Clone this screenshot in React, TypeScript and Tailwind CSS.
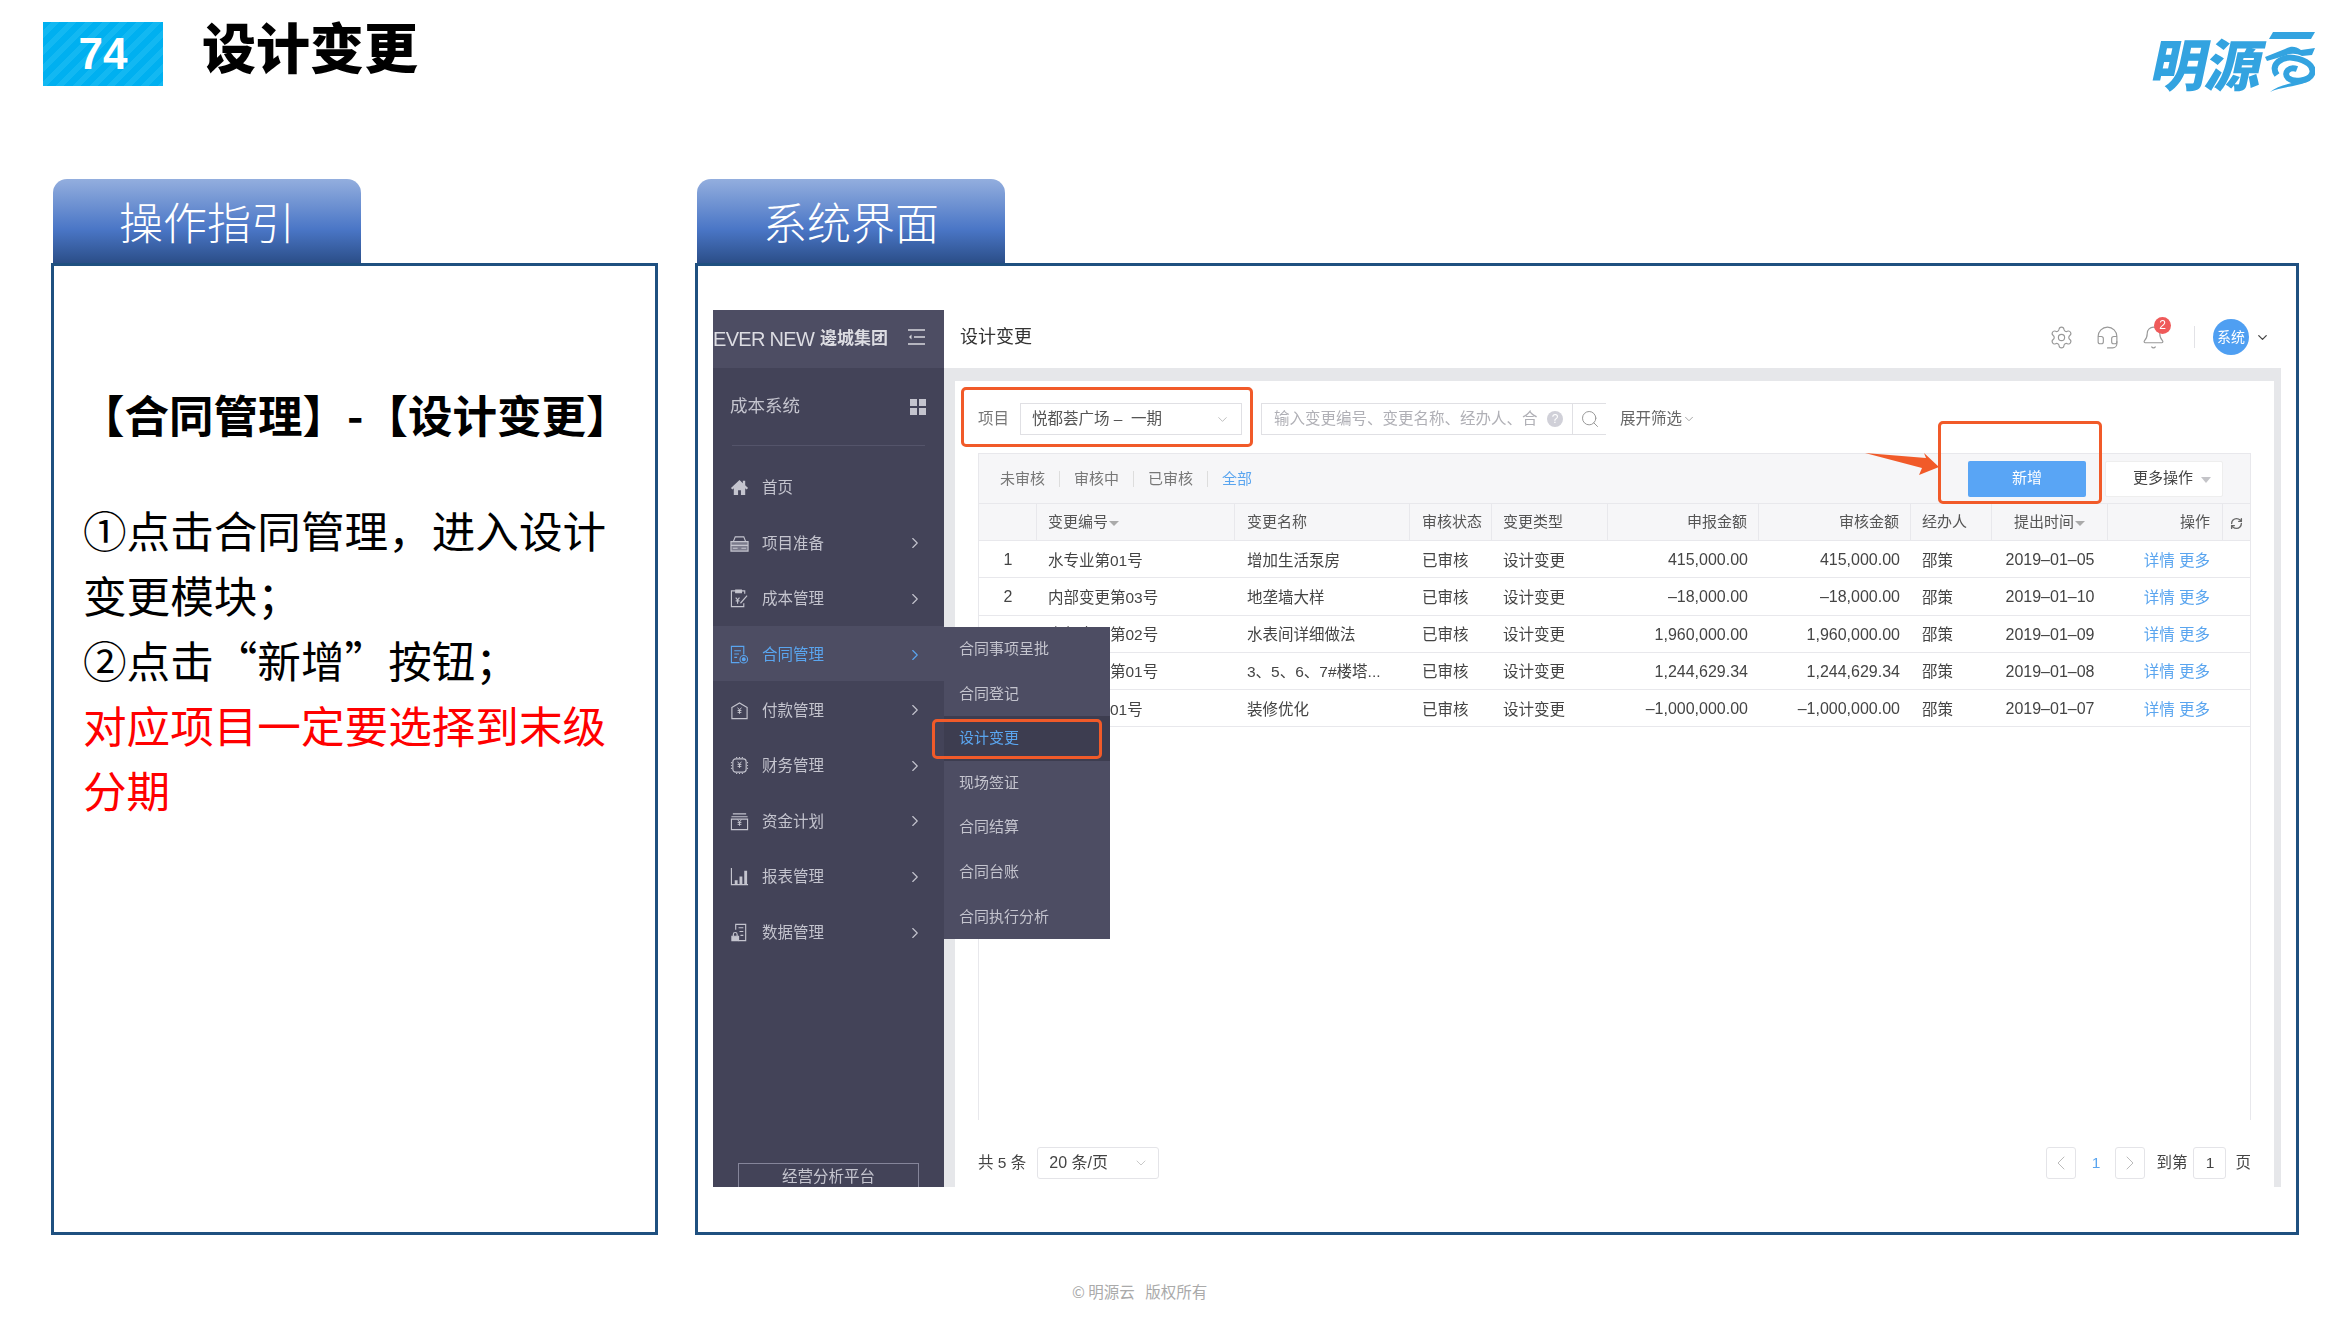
import { ChevronDown, ChevronLeft, ChevronRight, Bell, Headset, RefreshCw, Search, Settings } from "lucide-react";

const uiFont = "[font-family:'Liberation_Sans','Noto_Sans_CJK_SC',sans-serif]";

function IconShell({ children }: { children: React.ReactNode }) {
  return (
    <svg viewBox="0 0 20 20" className="w-[19px] h-[19px] shrink-0" fill="none" stroke="currentColor" strokeWidth="1.2">
      {children}
    </svg>
  );
}

const Yen = ({ y = 10 }: { y?: number }) => (
  <path d={`M8 ${y - 3}l2 2.5 2-2.5M10 ${y - 0.5}v4M8 ${y}h4M8 ${y + 2}h4`} strokeWidth="1" />
);

const menu = [
  {
    label: "首页",
    icon: (
      <IconShell>
        <path d="M10 2 1 10.5l1.5 1.5L4 10.7V18h4.5v-5h3v5H16v-7.3l1.5 1.3 1.5-1.5-3-2.8V3h-2.5v2.4z" fill="currentColor" stroke="none" />
      </IconShell>
    ),
  },
  {
    label: "项目准备",
    arrow: true,
    icon: (
      <IconShell>
        <path d="M3.5 8 5.5 3h9l2 5" />
        <path d="M1 8h18v4H1zM1 12h18v6H1z" fill="currentColor" fillOpacity="0.45" />
        <path d="M3 15h5M12 15h5" />
      </IconShell>
    ),
  },
  {
    label: "成本管理",
    arrow: true,
    icon: (
      <IconShell>
        <path d="M6 2H1.5v16.5h13V15M12 2h3.5v3" />
        <path d="M6 1h6v3H6z" fill="currentColor" />
        <path d="M6 9l2 2.5L10 9M8 11.500v4M6 12.500h4M18 7l-7 8" />
      </IconShell>
    ),
  },
  {
    label: "合同管理",
    arrow: true,
    active: true,
    icon: (
      <IconShell>
        <path d="M10 18.500H1.500v-17h13V10M4.500 6h7M4.500 9.500h5M4.500 13h3" />
        <circle cx="14.500" cy="15" r="4" />
        <circle cx="14.500" cy="15" r="1.500" fill="currentColor" />
      </IconShell>
    ),
  },
  {
    label: "付款管理",
    arrow: true,
    icon: (
      <IconShell>
        <path d="M1.500 7 10 2l8.500 5M2 7v11.500h16V7" />
        <Yen y={10} />
      </IconShell>
    ),
  },
  {
    label: "财务管理",
    arrow: true,
    icon: (
      <IconShell>
        <rect x="3" y="3" width="14" height="14" rx="3" />
        <path d="M1 7h1M1 10h1M1 13h1M18 7h1M18 10h1M18 13h1M7 1v1M10 1v1M13 1v1M7 18v1M10 18v1M13 18v1" />
        <Yen y={9} />
      </IconShell>
    ),
  },
  {
    label: "资金计划",
    arrow: true,
    icon: (
      <IconShell>
        <path d="M3 2h14M1.500 5h17" />
        <path d="M1.500 7.500h17V18.500h-17z" />
        <Yen y={11} />
      </IconShell>
    ),
  },
  {
    label: "报表管理",
    arrow: true,
    icon: (
      <IconShell>
        <path d="M1.500 1v17.500h17.500" />
        <path d="M5 14h3v4H5zM10 10h3v8h-3zM15 4h3v14h-3z" fill="currentColor" stroke="none" />
      </IconShell>
    ),
  },
  {
    label: "数据管理",
    arrow: true,
    icon: (
      <IconShell>
        <path d="M6 7V1.500h10.500V18.500H9" />
        <path d="M9 5h5M10 9h4M11 13h3" />
        <path d="M2 14h7v4.500H2z" fill="currentColor" />
        <path d="M3.500 14v-2a2 2 0 0 1 4 0v2" />
      </IconShell>
    ),
  },
];

const subMenu = ["合同事项呈批", "合同登记", "设计变更", "现场签证", "合同结算", "合同台账", "合同执行分析"];

const rows = [
  ["1", "水专业第01号", "增加生活泵房", "415,000.00", "415,000.00", "2019–01–05"],
  ["2", "内部变更第03号", "地垄墙大样", "–18,000.00", "–18,000.00", "2019–01–10"],
  ["3", "内部变更第02号", "水表间详细做法", "1,960,000.00", "1,960,000.00", "2019–01–09"],
  ["4", "内部变更第01号", "3、5、6、7#楼塔...", "1,244,629.34", "1,244,629.34", "2019–01–08"],
  ["5", "装修变更01号", "装修优化", "–1,000,000.00", "–1,000,000.00", "2019–01–07"],
];

const gridCols = "grid grid-cols-[58px_198px_175px_82px_116px_151px_152px_81px_116px_115px_26px]";

function SortCaret() {
  return <span className="ml-[1px] mt-[3px] w-0 h-0 border-x-[5px] border-x-transparent border-t-[5px] border-t-[#aaa]" />;
}

function PanelTab({ title }: { title: string }) {
  return (
    <div className="w-[308px] h-[84px] ml-[2px] rounded-t-[14px] bg-[linear-gradient(180deg,#93aede_0%,#4a76c6_60%,#2b4e88_100%)] flex items-center justify-center text-white text-[44px] leading-none font-light">
      {title}
    </div>
  );
}

function Logo() {
  return (
    <div className="flex items-start text-[#33a3e0]">
      <span className="text-[56px] leading-[60px] font-black -skew-x-12 tracking-[-1px]">明源</span>
      <svg viewBox="0 0 50 60" className="w-[50px] h-[60px] ml-[2px]" fill="currentColor">
        <path d="M8 0h42l-4 7H4z" />
        <path d="M0 25 20 17c6-3 10-3 16 1l14-2-3 7-10 1c-6-3-12-3-18 0l-17 5z" />
        <path d="M12 43C4 32 18 24 29 26c12 2 21 8 18 16-3 7-18 9-24 4-5-5 1-12 9-9" fill="none" stroke="currentColor" strokeWidth="6" />
        <path d="M5 60c8-7 22-8 36-14l4 2C32 56 16 54 5 60z" />
      </svg>
    </div>
  );
}

function Sidebar() {
  return (
    <aside className="w-[231px] shrink-0 bg-[#434358] flex flex-col text-[#c4c4ce] blur-[0.4px]">
      <div className="h-[58px] bg-[#4d4d63] flex items-center text-[#dcdce2] overflow-hidden">
        <span className="text-[20px] tracking-[-0.7px] whitespace-nowrap">EVER NEW</span>
        <span className="ml-[6px] text-[17px] font-bold whitespace-nowrap">邊城集团</span>
        <svg viewBox="0 0 17 16" className="ml-auto mr-[19px] -mt-[5px] w-[17px] h-[16px]" fill="none" stroke="#d8d8de" strokeWidth="1.500">
          <path d="M0 1h17M6 8h11M0 15h17" />
          <path d="M3.500 5.500 1 8l2.500 2.500z" fill="#d8d8de" stroke="none" />
        </svg>
      </div>
      <div className="h-[78px] mx-[19px] border-b border-[#54546a] flex items-center justify-between text-[17.500px]">
        <span className="-ml-[2px]">成本系统</span>
        <div className="grid grid-cols-2 gap-[2px] -mr-[1px]">
          <span className="w-[7px] h-[7px] bg-[#c4c4ce]" />
          <span className="w-[7px] h-[7px] bg-[#c4c4ce]" />
          <span className="w-[7px] h-[7px] bg-[#c4c4ce]" />
          <span className="w-[7px] h-[7px] bg-[#c4c4ce]" />
        </div>
      </div>
      <nav className="mt-[13px]">
        {menu.map((item) => (
          <div
            key={item.label}
            className={`h-[55.600px] pt-[2px] pl-[17px] pr-[20px] flex items-center text-[15.500px] ${item.active ? "bg-[#4d4d63] text-[#5aa5ef]" : ""}`}
          >
            {item.icon}
            <span className="ml-[13px]">{item.label}</span>
            {item.arrow && <ChevronRight className="ml-auto w-[18px] h-[18px]" strokeWidth={1.500} />}
          </div>
        ))}
      </nav>
      <div className="mt-auto mx-[25px] h-[24px] border border-b-0 border-[#85859a] flex items-center justify-center text-[15.500px] leading-none pt-[2px]">
        经营分析平台
      </div>
    </aside>
  );
}

function TopBar() {
  return (
    <header className="h-[58px] bg-white flex items-center pb-[4px] pl-[16px] pr-[11px] text-[#999]">
      <span className="text-[18px] text-[#333]">设计变更</span>
      <Settings className="ml-auto w-[25px] h-[25px]" strokeWidth={1.100} />
      <Headset className="ml-[21px] w-[25px] h-[25px]" strokeWidth={1.100} />
      <div className="ml-[21px] relative">
        <Bell className="w-[25px] h-[25px]" strokeWidth={1.100} />
        <span className="absolute -top-[8px] left-[13px] w-[17px] h-[17px] rounded-full bg-[#ef5a5a] text-white text-[12px] leading-[17px] text-center">2</span>
      </div>
      <span className="ml-[28px] w-px h-[22px] bg-[#e2e2e6]" />
      <span className="ml-[18px] w-[36px] h-[36px] rounded-full bg-[#4f9ff2] text-white text-[14px] flex items-center justify-center">系统</span>
      <ChevronDown className="ml-[6px] w-[15px] h-[15px] text-[#444]" strokeWidth={2} />
    </header>
  );
}

function FilterBar() {
  return (
    <div className="h-[72px] pt-[22px] flex items-start text-[15.500px] text-[#777]">
      <span className="w-[42px] leading-[32px]">项目</span>
      <div className="w-[222px] h-[32px] border border-[#e0e0e4] flex items-center pl-[11px] pr-[11px] text-[#555] whitespace-pre">
        悦都荟广场 –  一期
        <ChevronDown className="ml-auto w-[15px] h-[15px] text-[#aaa]" strokeWidth={1.200} />
      </div>
      <div className="ml-[19px] w-[312px] h-[32px] border border-[#e0e0e4] flex items-center pl-[12px] pr-[9px] text-[#b0b0b6] whitespace-nowrap overflow-hidden">
        输入变更编号、变更名称、经办人、合
        <span className="ml-auto w-[16px] h-[16px] rounded-full bg-[#d0d0d8] text-white text-[12px] leading-[16px] text-center shrink-0">?</span>
      </div>
      <div className="w-[33px] h-[32px] border-y border-[#e0e0e4] flex items-center justify-center text-[#999]">
        <Search className="w-[20px] h-[20px]" strokeWidth={1.200} />
      </div>
      <span className="ml-[14px] leading-[32px] text-[#666]">展开筛选</span>
      <ChevronDown className="mt-[9px] w-[14px] h-[14px] text-[#999]" strokeWidth={1.500} />
    </div>
  );
}

function Toolbar() {
  return (
    <div className="h-[50px] bg-[#f6f6f8] border-t border-[#e8e8ec] flex items-center pl-[21px] pr-[27px] text-[15px] text-[#777]">
      <span className="pt-[2px]">未审核</span>
      <span className="mx-[14px] w-px h-[16px] bg-[#ddd]" />
      <span className="pt-[2px]">审核中</span>
      <span className="mx-[14px] w-px h-[16px] bg-[#ddd]" />
      <span className="pt-[2px]">已审核</span>
      <span className="mx-[14px] w-px h-[16px] bg-[#ddd]" />
      <span className="pt-[2px] text-[#5aa5ef]">全部</span>
      <button className="ml-auto w-[118px] h-[36px] rounded-[2px] bg-[#59a5f5] text-white">新增</button>
      <button className="ml-[19px] w-[118px] h-[36px] pl-[27px] rounded-[2px] bg-white border border-[#eee] text-[#444] flex items-center">
        更多操作
        <span className="ml-[8px] mt-[2px] w-0 h-0 border-x-[5px] border-x-transparent border-t-[6px] border-t-[#c4c4c8]" />
      </button>
    </div>
  );
}

function DataTable() {
  const head = "h-full border-r border-[#e8e8ec] flex items-center";
  return (
    <div className="h-[667px] border-x border-[#e8e8ec]">
      <Toolbar />
      <div className={`${gridCols} h-[38px] bg-[#f6f6f8] border-y border-[#e8e8ec] text-[15px] text-[#555]`}>
        <div className={head} />
        <div className={`${head} pl-[11px]`}>变更编号<SortCaret /></div>
        <div className={`${head} pl-[12px]`}>变更名称</div>
        <div className={`${head} pl-[12px]`}>审核状态</div>
        <div className={`${head} pl-[11px]`}>变更类型</div>
        <div className={`${head} justify-end pr-[11px]`}>申报金额</div>
        <div className={`${head} justify-end pr-[11px]`}>审核金额</div>
        <div className={`${head} pl-[11px]`}>经办人</div>
        <div className={`${head} justify-center`}>提出时间<SortCaret /></div>
        <div className={`${head} justify-end pr-[12px]`}>操作</div>
        <div className="flex items-center justify-center pt-[2px] text-[#666]">
          <RefreshCw className="w-[13px] h-[13px]" strokeWidth={2.500} />
        </div>
      </div>
      {rows.map((r) => (
        <div key={r[0]} className={`${gridCols} h-[37.300px] pt-[2px] items-center border-b border-[#e8e8ec] text-[15.500px] text-[#444]`}>
          <span className="text-center text-[16px]">{r[0]}</span>
          <span className="pl-[11px]">{r[1]}</span>
          <span className="pl-[12px] whitespace-nowrap">{r[2]}</span>
          <span className="pl-[12px]">已审核</span>
          <span className="pl-[11px]">设计变更</span>
          <span className="text-right pr-[11px] text-[16px]">{r[3]}</span>
          <span className="text-right pr-[11px] text-[16px]">{r[4]}</span>
          <span className="pl-[11px]">邵策</span>
          <span className="text-center text-[16px]">{r[5]}</span>
          <span className="text-right pr-[13px] text-[#5aa5ef]">详情 更多</span>
        </div>
      ))}
    </div>
  );
}

function Pagination() {
  const box = "h-[32px] border border-[#e4e4e8] rounded-[3px] flex items-center justify-center";
  return (
    <div className="flex-1 pt-[18px] flex items-center text-[15.500px] text-[#444]">
      <span>共 5 条</span>
      <div className={`${box} ml-[11px] w-[122px] !justify-start pl-[11px] pr-[9px] text-[16px]`}>
        20 条/页
        <ChevronDown className="ml-auto w-[16px] h-[16px] text-[#bbb]" strokeWidth={1.200} />
      </div>
      <div className={`${box} ml-auto w-[30px] text-[#bbb]`}>
        <ChevronLeft className="w-[24px] h-[24px]" strokeWidth={1} />
      </div>
      <span className="w-[39px] text-center text-[#5aa5ef]">1</span>
      <div className={`${box} w-[30px] text-[#bbb]`}>
        <ChevronRight className="w-[24px] h-[24px]" strokeWidth={1} />
      </div>
      <span className="ml-[11px]">到第</span>
      <div className={`${box} ml-[6px] w-[33px]`}>1</div>
      <span className="ml-[9px]">页</span>
    </div>
  );
}

function SystemScreen() {
  return (
    <div className={`relative h-[877px] flex ${uiFont}`}>
      <Sidebar />
      <main className="flex-1 bg-[#e6e7ea] flex flex-col blur-[0.4px]">
        <TopBar />
        <div className="mt-[13px] ml-[11px] mr-[7px] flex-1 bg-white px-[23px] flex flex-col">
          <FilterBar />
          <DataTable />
          <Pagination />
        </div>
      </main>

      {/* flyout + annotations sit on top of the page */}
      <div className="absolute left-[231px] top-[317px] w-[166px] h-[312px] bg-[#4d4d63] text-[15px] text-[#c4c4ce] blur-[0.4px]">
        {subMenu.map((s) => (
          <div
            key={s}
            className={`h-[44.600px] pl-[15px] flex items-center ${s === "设计变更" ? "bg-[#3d3d50] text-[#5aa5ef]" : ""}`}
          >
            {s}
          </div>
        ))}
      </div>
      <div className="absolute left-[248px] top-[77px] w-[292px] h-[60px] border-[3px] border-[#f15a29] rounded-[5px]" />
      <div className="absolute left-[219px] top-[409px] w-[170px] h-[40px] border-[3px] border-[#f15a29] rounded-[5px]" />
      <div className="absolute left-[1225px] top-[111px] w-[164px] h-[83px] border-[3px] border-[#f15a29] rounded-[5px]" />
      <svg viewBox="0 0 74 24" className="absolute left-[1152px] top-[142px] w-[74px] h-[24px]" fill="#f15a29">
        <polygon points="0,1 61,6 59,1 74,15 54,23 57,16" />
      </svg>
    </div>
  );
}

export default function App() {
  return (
    <div className="w-[2350px] h-[1318px] bg-white overflow-hidden [font-family:'Noto_Sans_CJK_SC',sans-serif]">
      <div className="h-[179px] pt-[22px] pl-[43px] pr-[35px] flex items-start">
        <div className="w-[120px] h-[64px] bg-[repeating-linear-gradient(135deg,#00b0f0_0px,#00b0f0_6px,#12b8f2_6px,#12b8f2_12px)] flex items-center justify-center text-white text-[44px] font-bold [font-family:'Liberation_Sans',sans-serif]">
          74
        </div>
        <h1 className="ml-[39px] -mt-[3px] text-[54px] leading-[54px] font-black text-black">设计变更</h1>
        <div className="ml-auto mt-[10px]">
          <Logo />
        </div>
      </div>

      <div className="pl-[51px] flex items-start">
        <section className="w-[607px]">
          <PanelTab title="操作指引" />
          <div className="h-[972px] border-[3px] border-[#1f5080] pt-[118px] pl-[26px] text-black">
            <h2 className="text-[44.500px] leading-[60px] font-bold whitespace-nowrap">【合同管理】-【设计变更】</h2>
            <p className="mt-[53px] ml-[3px] w-[526px] text-[43.600px] leading-[65px]">
              ①点击合同管理，进入设计变更模块；
              <br />
              ②点击“新增”按钮；
              <br />
              <span className="text-[#ff0000]">对应项目一定要选择到末级分期</span>
            </p>
          </div>
        </section>

        <section className="ml-[37px] w-[1604px]">
          <PanelTab title="系统界面" />
          <div className="h-[972px] border-[3px] border-[#1f5080] pt-[44px] pl-[15px] pr-[15px]">
            <SystemScreen />
          </div>
        </section>
      </div>

      <footer className="mt-[46px] ml-[1072px] text-[15.500px] leading-[20px] text-[#aaa]">© 明源云&nbsp;&nbsp;&nbsp;版权所有</footer>
    </div>
  );
}
